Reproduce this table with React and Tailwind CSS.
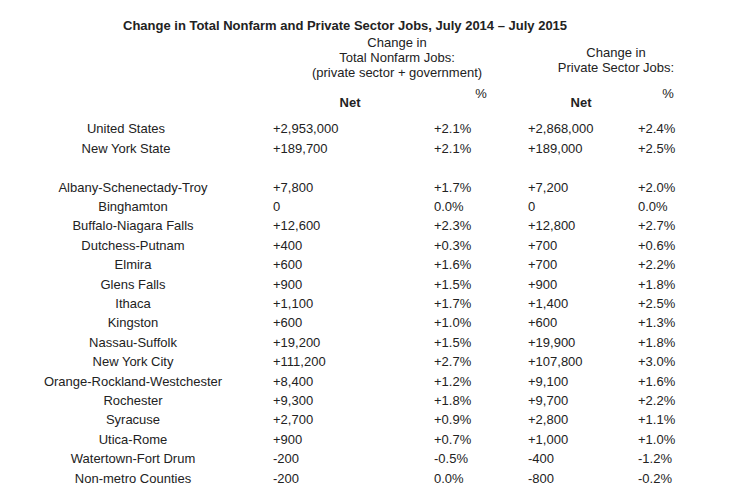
const national = [
  { name: 'United States', net: '+2,953,000', pct: '+2.1%', pnet: '+2,868,000', ppct: '+2.4%' },
  { name: 'New York State', net: '+189,700', pct: '+2.1%', pnet: '+189,000', ppct: '+2.5%' },
];

const regions = [
  { name: 'Albany-Schenectady-Troy', net: '+7,800', pct: '+1.7%', pnet: '+7,200', ppct: '+2.0%' },
  { name: 'Binghamton', net: '0', pct: '0.0%', pnet: '0', ppct: '0.0%' },
  { name: 'Buffalo-Niagara Falls', net: '+12,600', pct: '+2.3%', pnet: '+12,800', ppct: '+2.7%' },
  { name: 'Dutchess-Putnam', net: '+400', pct: '+0.3%', pnet: '+700', ppct: '+0.6%' },
  { name: 'Elmira', net: '+600', pct: '+1.6%', pnet: '+700', ppct: '+2.2%' },
  { name: 'Glens Falls', net: '+900', pct: '+1.5%', pnet: '+900', ppct: '+1.8%' },
  { name: 'Ithaca', net: '+1,100', pct: '+1.7%', pnet: '+1,400', ppct: '+2.5%' },
  { name: 'Kingston', net: '+600', pct: '+1.0%', pnet: '+600', ppct: '+1.3%' },
  { name: 'Nassau-Suffolk', net: '+19,200', pct: '+1.5%', pnet: '+19,900', ppct: '+1.8%' },
  { name: 'New York City', net: '+111,200', pct: '+2.7%', pnet: '+107,800', ppct: '+3.0%' },
  { name: 'Orange-Rockland-Westchester', net: '+8,400', pct: '+1.2%', pnet: '+9,100', ppct: '+1.6%' },
  { name: 'Rochester', net: '+9,300', pct: '+1.8%', pnet: '+9,700', ppct: '+2.2%' },
  { name: 'Syracuse', net: '+2,700', pct: '+0.9%', pnet: '+2,800', ppct: '+1.1%' },
  { name: 'Utica-Rome', net: '+900', pct: '+0.7%', pnet: '+1,000', ppct: '+1.0%' },
  { name: 'Watertown-Fort Drum', net: '-200', pct: '-0.5%', pnet: '-400', ppct: '-1.2%' },
  { name: 'Non-metro Counties', net: '-200', pct: '0.0%', pnet: '-800', ppct: '-0.2%' },
];

const Row = ({ row, tall, shift }) => (
  <div className={`grid grid-cols-[266px_168px_94px_110px_66px] ${tall ? 'leading-[20px]' : 'leading-[19.4px]'}`}>
    <div className={`text-center ${shift ? 'pr-[14px]' : ''}`}>{row.name}</div>
    <div className="pl-[7px]">{row.net}</div>
    <div>{row.pct}</div>
    <div>{row.pnet}</div>
    <div>{row.ppct}</div>
  </div>
);

const App = () => {
  return (
    <div className="w-[745px] h-[502px] bg-white text-[#222] text-[13px] overflow-hidden" style={{ fontFamily: '"Liberation Sans", Arial, sans-serif' }}>
      {/* Title */}
      <div className="pt-[18px] pl-[123px] font-bold leading-[16px]">
        Change in Total Nonfarm and Private Sector Jobs, July 2014 – July 2015
      </div>

      {/* Group headers */}
      <div className="grid grid-cols-[266px_262px_176px] leading-[15px] mt-px">
        <div />
        <div className="text-center">
          <div>Change in</div>
          <div>Total Nonfarm Jobs:</div>
          <div>(private sector + government)</div>
        </div>
        <div className="text-center mt-[10px]">
          <div>Change in</div>
          <div>Private Sector Jobs:</div>
        </div>
      </div>

      {/* Column headers */}
      <div className="grid grid-cols-[266px_168px_94px_110px_66px] leading-[15px] mt-[6px]">
        <div />
        <div className="text-center pt-[9px] font-bold">Net</div>
        <div className="text-center">%</div>
        <div className="text-center pt-[9px] font-bold pr-[4px]">Net</div>
        <div className="text-center pr-[6px]">%</div>
      </div>

      {/* Data */}
      <div className="mt-[9px]">
        {national.map((r) => (
          <Row key={r.name} row={r} tall shift />
        ))}
      </div>
      <div className="mt-[18.5px]">
        {regions.map((r) => (
          <Row key={r.name} row={r} />
        ))}
      </div>
    </div>
  );
};

export default App;
